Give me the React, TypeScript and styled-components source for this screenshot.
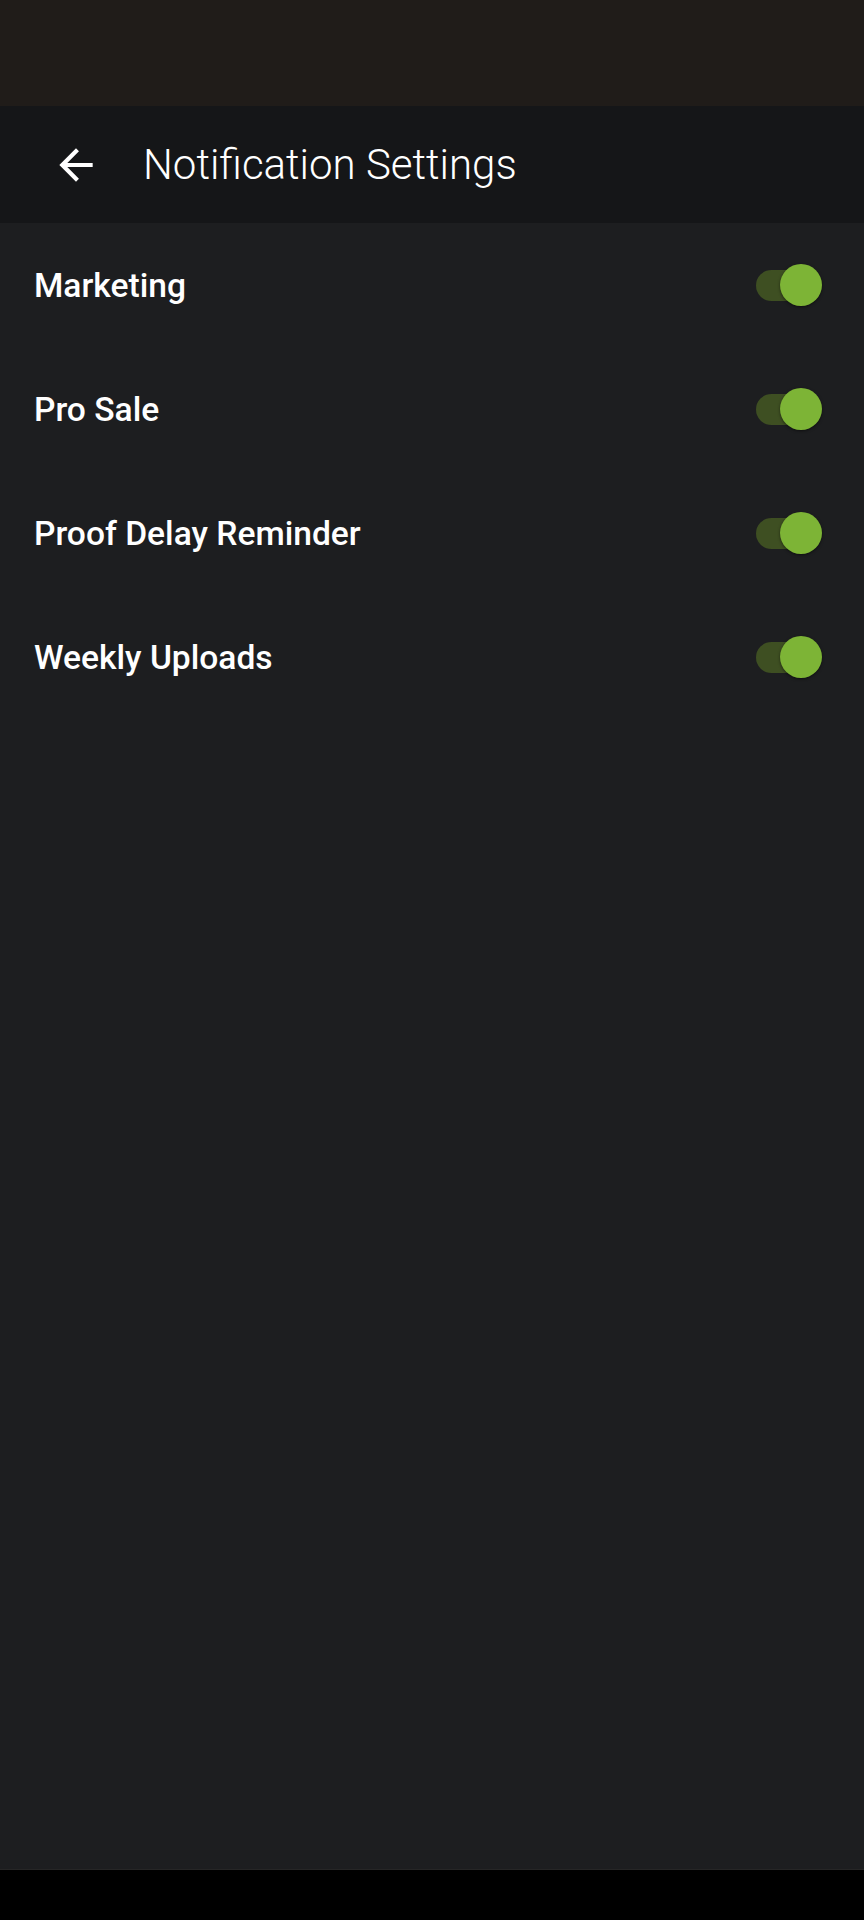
import React, { useState } from 'react';
import styled, { createGlobalStyle } from 'styled-components';

const GlobalStyle = createGlobalStyle`
  html, body {
    margin: 0;
    padding: 0;
    background: #1d1e20;
  }
  * {
    box-sizing: border-box;
  }
`;

const Screen = styled.div`
  display: flex;
  flex-direction: column;
  width: 864px;
  min-height: 1920px;
  background: #1d1e20;
  font-family: Roboto, "Noto Sans", sans-serif;
  color: #ffffff;
`;

const StatusBar = styled.div`
  height: 106px;
  flex-shrink: 0;
  background: #201c19;
`;

const Toolbar = styled.header`
  display: flex;
  align-items: center;
  height: 117px;
  flex-shrink: 0;
  background: #151618;
`;

const BackButton = styled.button`
  display: flex;
  align-items: center;
  justify-content: center;
  width: 50px;
  height: 50px;
  margin-left: 51px;
  padding: 0;
  border: 0;
  background: transparent;
  color: #ffffff;
  cursor: pointer;
`;

const Title = styled.h1`
  margin: 0 0 0 42px;
  font-size: 42px;
  font-weight: 300;
  letter-spacing: 0;
  color: #ffffff;
`;

const List = styled.main`
  display: flex;
  flex-direction: column;
  flex: 1;
`;

const Row = styled.div`
  display: flex;
  align-items: center;
  justify-content: space-between;
  height: 124px;
  padding: 0 46px 0 34px;
`;

const Label = styled.span`
  font-size: 33.6px;
  font-weight: 500;
  color: #ffffff;
`;

const SwitchTrack = styled.button<{ $on: boolean }>`
  position: relative;
  width: 62px;
  height: 31px;
  padding: 0;
  border: 0;
  border-radius: 16px;
  background: ${({ $on }) => ($on ? '#3e4f22' : '#4a4a4a')};
  cursor: pointer;
`;

const SwitchThumb = styled.span<{ $on: boolean }>`
  position: absolute;
  top: 50%;
  left: ${({ $on }) => ($on ? '24px' : '-4px')};
  width: 42px;
  height: 42px;
  margin-top: -21px;
  border-radius: 50%;
  background: ${({ $on }) => ($on ? '#7db436' : '#bdbdbd')};
  box-shadow: 0 1px 3px rgba(0, 0, 0, 0.5);
`;

const NavBar = styled.div`
  height: 51px;
  flex-shrink: 0;
  background: #000000;
  border-top: 1px solid #262626;
`;

const settings = ['Marketing', 'Pro Sale', 'Proof Delay Reminder', 'Weekly Uploads'];

const Toggle = ({ initial }: { initial: boolean }) => {
  const [on, setOn] = useState(initial);
  return (
    <SwitchTrack $on={on} onClick={() => setOn(!on)} aria-pressed={on}>
      <SwitchThumb $on={on} />
    </SwitchTrack>
  );
};

export default function App() {
  return (
    <Screen>
      <GlobalStyle />
      <StatusBar />
      <Toolbar>
        <BackButton aria-label="Back">
          <svg width="50" height="50" viewBox="0 0 24 24" fill="currentColor">
            <path d="M20 11H7.83l5.59-5.59L12 4l-8 8 8 8 1.41-1.41L7.83 13H20v-2z" />
          </svg>
        </BackButton>
        <Title>Notification Settings</Title>
      </Toolbar>
      <List>
        {settings.map((name) => (
          <Row key={name}>
            <Label>{name}</Label>
            <Toggle initial />
          </Row>
        ))}
      </List>
      <NavBar />
    </Screen>
  );
}
